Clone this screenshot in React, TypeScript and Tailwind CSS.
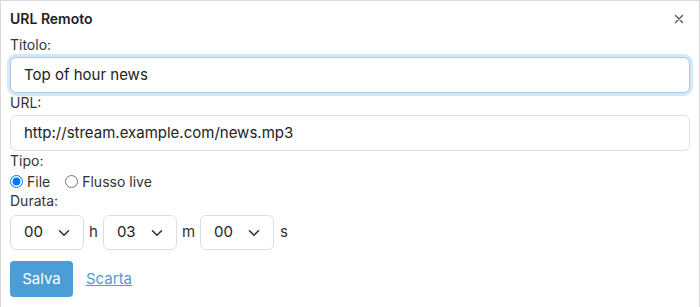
import React from "react";

function Chevron() {
  return (
    <svg width="12" height="8" viewBox="0 0 12 8" className="shrink-0">
      <path d="M1.5 1.8 L6 6.2 L10.5 1.8" fill="none" stroke="#333" strokeWidth="1.6" strokeLinecap="round" strokeLinejoin="round" />
    </svg>
  );
}

function Sel({ value }: { value: string }) {
  return (
    <div className="flex h-[35px] w-[74px] items-center justify-between rounded-[6px] border border-[#dedede] bg-white pl-[13px] pr-[13px] text-[15px] text-[#222]">
      <span>{value}</span>
      <Chevron />
    </div>
  );
}

export default function App() {
  return (
    <div
      className="h-[307px] w-[700px] overflow-hidden border-l border-r border-t border-[#d9d9d9] bg-white px-[9px] text-[#333]"
      style={{ fontFamily: "Inter, 'Noto Sans', sans-serif" }}
    >
      <div className="flex h-[34px] items-center justify-between pt-[1px]">
        <span className="text-[14px] font-semibold text-[#222]">URL Remoto</span>
        <svg width="10" height="10" viewBox="0 0 10 10" className="mr-[6px]">
          <path d="M1.5 1.5 L8.5 8.5 M8.5 1.5 L1.5 8.5" stroke="#555" strokeWidth="1.4" strokeLinecap="round" />
        </svg>
      </div>
      <div className="text-[14px] leading-[20px]">Titolo:</div>
      <div className="mt-[2px] flex h-[36px] items-center rounded-[6px] border border-[#a3c9e8] bg-white px-[13px] text-[15px] text-[#222] shadow-[0_0_0_3px_rgba(120,175,225,0.3)]">
        Top of hour news
      </div>
      <div className="text-[14px] leading-[20px]">URL:</div>
      <div className="mt-[2px] flex h-[36px] items-center rounded-[6px] border border-[#dedede] bg-white px-[13px] text-[15px] text-[#222]">
        http://stream.example.com/news.mp3
      </div>
      <div className="text-[14px] leading-[20px]">Tipo:</div>
      <div className="flex h-[20px] items-center text-[14px]">
        <input type="radio" checked readOnly className="m-0 h-[13px] w-[13px]" />
        <span className="ml-[4px]">File</span>
        <input type="radio" checked={false} readOnly className="m-0 ml-[15px] h-[13px] w-[13px]" />
        <span className="ml-[4px]">Flusso live</span>
      </div>
      <div className="text-[14px] leading-[20px]">Durata:</div>
      <div className="mt-[4px] flex items-center text-[15px]">
        <Sel value="00" />
        <span className="ml-[5px] mr-[5px]">h</span>
        <Sel value="03" />
        <span className="ml-[5px] mr-[5px]">m</span>
        <Sel value="00" />
        <span className="ml-[6px]">s</span>
      </div>
      <div className="mt-[11px] flex items-center">
        <div className="flex h-[36px] w-[63px] items-center justify-center rounded-[4px] bg-[#4a9dd6] text-[15px] text-white">
          Salva
        </div>
        <span className="ml-[13px] text-[15px] text-[#4a9dd6] underline">Scarta</span>
      </div>
    </div>
  );
}
